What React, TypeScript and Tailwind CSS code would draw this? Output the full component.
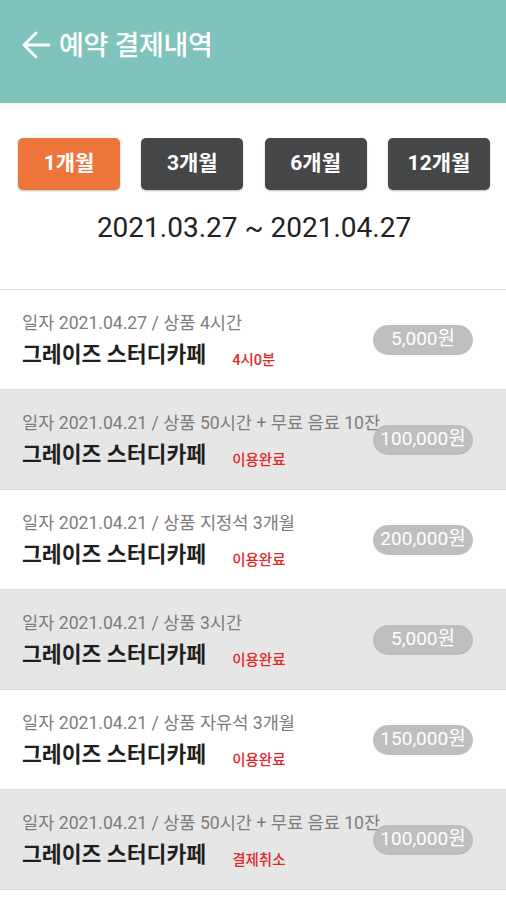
import { useState } from "react";

interface Payment {
  id: number;
  date: string;
  product: string;
  status: string;
  price: string;
}

const payments: Payment[] = [
  { id: 1, date: "2021.04.27", product: "4시간", status: "4시0분", price: "5,000원" },
  { id: 2, date: "2021.04.21", product: "50시간 + 무료 음료 10잔", status: "이용완료", price: "100,000원" },
  { id: 3, date: "2021.04.21", product: "지정석 3개월", status: "이용완료", price: "200,000원" },
  { id: 4, date: "2021.04.21", product: "3시간", status: "이용완료", price: "5,000원" },
  { id: 5, date: "2021.04.21", product: "자유석 3개월", status: "이용완료", price: "150,000원" },
  { id: 6, date: "2021.04.21", product: "50시간 + 무료 음료 10잔", status: "결제취소", price: "100,000원" },
];

const periods = ["1개월", "3개월", "6개월", "12개월"];

export default function App() {
  const [period, setPeriod] = useState("1개월");

  return (
    <div className="min-h-[900px] bg-white font-['Roboto','Noto_Sans_CJK_KR',sans-serif]">
      {/* Header */}
      <div className="flex h-[103px] items-center bg-[#7fc4bc] pl-[21px] shadow-[0_1px_2px_rgba(0,0,0,0.08)]">
        <svg width="30" height="32" viewBox="0 0 30 32" fill="none" className="mt-[-14px]">
          <path d="M28 16H4M15 4L3 16L15 28" stroke="white" strokeWidth="2.8" strokeLinecap="round" strokeLinejoin="round" />
        </svg>
        <h1 className="ml-[8px] mt-[-10px] text-[27px] font-medium leading-none tracking-[-0.3px] text-white">예약 결제내역</h1>
      </div>

      {/* Period filter */}
      <div className="pl-[18px] pr-[16px] pt-[35px]">
        <div className="flex justify-between">
          {periods.map((p) => (
            <button
              key={p}
              onClick={() => setPeriod(p)}
              className={
                period === p
                  ? "h-[52px] w-[102px] rounded-[5px] bg-[#ee7539] text-[21px] font-bold text-white shadow-[0_1px_2px_rgba(0,0,0,0.25)]"
                  : "h-[52px] w-[102px] rounded-[5px] bg-[#454647] text-[21px] font-bold text-white shadow-[0_1px_2px_rgba(0,0,0,0.25)]"
              }
            >
              {p}
            </button>
          ))}
        </div>
        <p className="mt-[21px] text-center text-[28px] leading-[34px] text-[#222]">2021.03.27 ~ 2021.04.27</p>
      </div>

      {/* List */}
      <div className="mt-[44px] border-t border-[#dedede]">
        {payments.map((item, i) => (
          <div
            key={item.id}
            className={
              i % 2 === 0
                ? "flex h-[100px] items-center border-b border-[#dcdcdc] bg-white pl-[22px] pr-[33px]"
                : "flex h-[100px] items-center border-b border-[#dcdcdc] bg-[#e6e6e6] pl-[22px] pr-[33px]"
            }
          >
            <div className="min-w-0 flex-1 self-start pt-[22px]">
              <p className="whitespace-nowrap text-[17.6px] leading-[22px] text-[#7d7d7d]">
                일자 {item.date} / 상품 {item.product}
              </p>
              <div className="mt-[6px] flex items-end">
                <span className="text-[21.6px] font-bold leading-[30px] text-[#1f1f1f]">그레이즈 스터디카페</span>
                <span className="mb-[1px] ml-[26px] text-[14.5px] font-medium leading-[16px] text-[#e02a2a]">{item.status}</span>
              </div>
            </div>
            <div className="relative flex h-[30px] w-[100px] shrink-0 items-center justify-center rounded-full bg-[#bebebe] text-[19px] text-white">
              {item.price}
            </div>
          </div>
        ))}
      </div>
    </div>
  );
}
